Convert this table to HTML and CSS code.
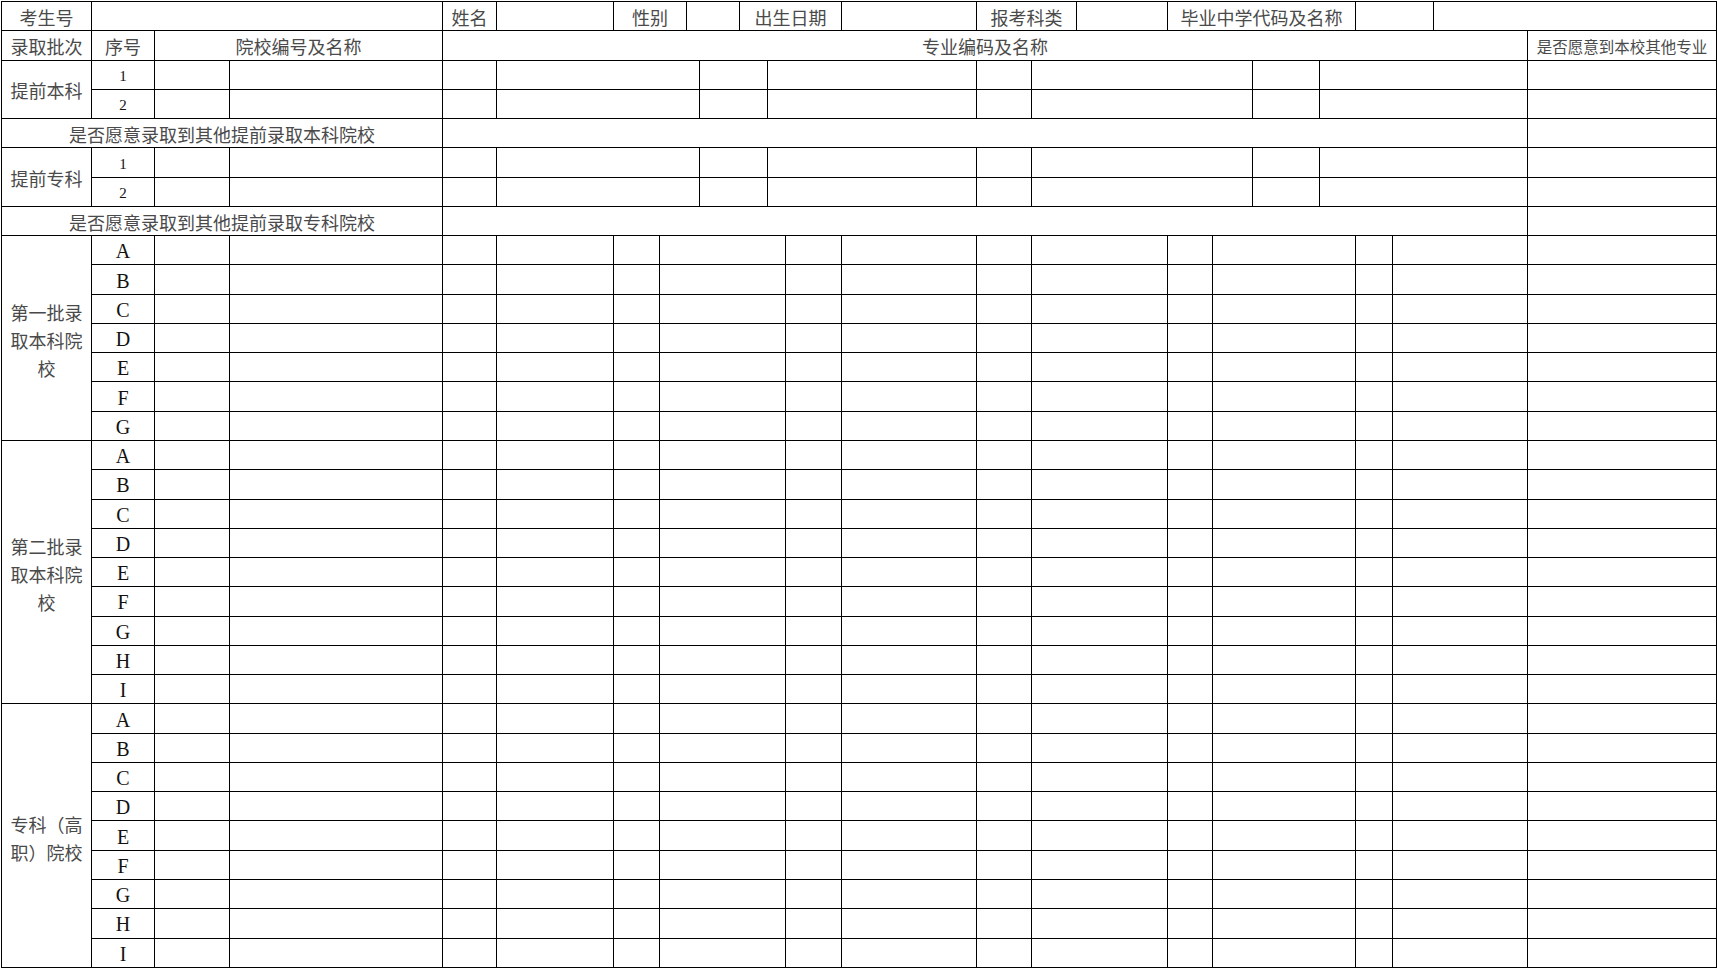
FILE: index.html
```html
<!DOCTYPE html>
<html lang="zh-CN">
<head>
<meta charset="utf-8">
<title>志愿表</title>
<link rel="stylesheet" href="styles.css">
</head>
<body>
<table class="sheet">
<colgroup>
<col class="c1"><col class="c2"><col class="c3"><col class="c4"><col class="c5">
<col class="c6"><col class="c7"><col class="c8"><col class="c9"><col class="c10">
<col class="c11"><col class="c12"><col class="c13"><col class="c14"><col class="c15">
<col class="c16"><col class="c17"><col class="c18"><col class="c19"><col class="c20">
<col class="c21"><col class="c22"><col class="c23"><col class="c24"><col class="c25">
</colgroup>
<tbody>
<tr>
<td class="lab">考生号</td><td colspan="3"></td><td class="lab">姓名</td><td></td>
<td colspan="2" class="lab">性别</td><td colspan="2"></td><td colspan="3" class="lab">出生日期</td><td></td>
<td colspan="2" class="lab">报考科类</td><td></td><td colspan="4" class="lab">毕业中学代码及名称</td>
<td colspan="2"></td><td colspan="2"></td>
</tr>
<tr>
<td class="lab">录取批次</td><td class="lab">序号</td><td colspan="2" class="lab">院校编号及名称</td>
<td colspan="20" class="lab">专业编码及名称</td><td class="lab small">是否愿意到本校其他专业</td>
</tr>
<tr>
<td rowspan="2" class="lab">提前本科</td><td class="dig">1</td><td></td><td></td><td></td>
<td colspan="4"></td><td colspan="2"></td><td colspan="3"></td><td></td><td colspan="4"></td><td></td><td colspan="4"></td><td></td>
</tr>
<tr>
<td class="dig">2</td><td></td><td></td><td></td>
<td colspan="4"></td><td colspan="2"></td><td colspan="3"></td><td></td><td colspan="4"></td><td></td><td colspan="4"></td><td></td>
</tr>
<tr>
<td colspan="4" class="lab big">是否愿意录取到其他提前录取本科院校</td><td colspan="20"></td><td></td>
</tr>
<tr>
<td rowspan="2" class="lab">提前专科</td><td class="dig">1</td><td></td><td></td><td></td>
<td colspan="4"></td><td colspan="2"></td><td colspan="3"></td><td></td><td colspan="4"></td><td></td><td colspan="4"></td><td></td>
</tr>
<tr>
<td class="dig">2</td><td></td><td></td><td></td>
<td colspan="4"></td><td colspan="2"></td><td colspan="3"></td><td></td><td colspan="4"></td><td></td><td colspan="4"></td><td></td>
</tr>
<tr>
<td colspan="4" class="lab big">是否愿意录取到其他提前录取专科院校</td><td colspan="20"></td><td></td>
</tr>

<tr><td rowspan="7" class="lab group">第一批录<br>取本科院<br>校</td><td class="let">A</td><td></td><td></td><td></td><td></td><td></td><td colspan="5"></td><td></td><td></td><td></td><td colspan="2"></td><td></td><td colspan="3"></td><td></td><td colspan="2"></td><td></td></tr>
<tr><td class="let">B</td><td></td><td></td><td></td><td></td><td></td><td colspan="5"></td><td></td><td></td><td></td><td colspan="2"></td><td></td><td colspan="3"></td><td></td><td colspan="2"></td><td></td></tr>
<tr><td class="let">C</td><td></td><td></td><td></td><td></td><td></td><td colspan="5"></td><td></td><td></td><td></td><td colspan="2"></td><td></td><td colspan="3"></td><td></td><td colspan="2"></td><td></td></tr>
<tr><td class="let">D</td><td></td><td></td><td></td><td></td><td></td><td colspan="5"></td><td></td><td></td><td></td><td colspan="2"></td><td></td><td colspan="3"></td><td></td><td colspan="2"></td><td></td></tr>
<tr><td class="let">E</td><td></td><td></td><td></td><td></td><td></td><td colspan="5"></td><td></td><td></td><td></td><td colspan="2"></td><td></td><td colspan="3"></td><td></td><td colspan="2"></td><td></td></tr>
<tr><td class="let">F</td><td></td><td></td><td></td><td></td><td></td><td colspan="5"></td><td></td><td></td><td></td><td colspan="2"></td><td></td><td colspan="3"></td><td></td><td colspan="2"></td><td></td></tr>
<tr><td class="let">G</td><td></td><td></td><td></td><td></td><td></td><td colspan="5"></td><td></td><td></td><td></td><td colspan="2"></td><td></td><td colspan="3"></td><td></td><td colspan="2"></td><td></td></tr>

<tr><td rowspan="9" class="lab group">第二批录<br>取本科院<br>校</td><td class="let">A</td><td></td><td></td><td></td><td></td><td></td><td colspan="5"></td><td></td><td></td><td></td><td colspan="2"></td><td></td><td colspan="3"></td><td></td><td colspan="2"></td><td></td></tr>
<tr><td class="let">B</td><td></td><td></td><td></td><td></td><td></td><td colspan="5"></td><td></td><td></td><td></td><td colspan="2"></td><td></td><td colspan="3"></td><td></td><td colspan="2"></td><td></td></tr>
<tr><td class="let">C</td><td></td><td></td><td></td><td></td><td></td><td colspan="5"></td><td></td><td></td><td></td><td colspan="2"></td><td></td><td colspan="3"></td><td></td><td colspan="2"></td><td></td></tr>
<tr><td class="let">D</td><td></td><td></td><td></td><td></td><td></td><td colspan="5"></td><td></td><td></td><td></td><td colspan="2"></td><td></td><td colspan="3"></td><td></td><td colspan="2"></td><td></td></tr>
<tr><td class="let">E</td><td></td><td></td><td></td><td></td><td></td><td colspan="5"></td><td></td><td></td><td></td><td colspan="2"></td><td></td><td colspan="3"></td><td></td><td colspan="2"></td><td></td></tr>
<tr><td class="let">F</td><td></td><td></td><td></td><td></td><td></td><td colspan="5"></td><td></td><td></td><td></td><td colspan="2"></td><td></td><td colspan="3"></td><td></td><td colspan="2"></td><td></td></tr>
<tr><td class="let">G</td><td></td><td></td><td></td><td></td><td></td><td colspan="5"></td><td></td><td></td><td></td><td colspan="2"></td><td></td><td colspan="3"></td><td></td><td colspan="2"></td><td></td></tr>
<tr><td class="let">H</td><td></td><td></td><td></td><td></td><td></td><td colspan="5"></td><td></td><td></td><td></td><td colspan="2"></td><td></td><td colspan="3"></td><td></td><td colspan="2"></td><td></td></tr>
<tr><td class="let">I</td><td></td><td></td><td></td><td></td><td></td><td colspan="5"></td><td></td><td></td><td></td><td colspan="2"></td><td></td><td colspan="3"></td><td></td><td colspan="2"></td><td></td></tr>

<tr><td rowspan="9" class="lab group">专科（高<br>职）院校</td><td class="let">A</td><td></td><td></td><td></td><td></td><td></td><td colspan="5"></td><td></td><td></td><td></td><td colspan="2"></td><td></td><td colspan="3"></td><td></td><td colspan="2"></td><td></td></tr>
<tr><td class="let">B</td><td></td><td></td><td></td><td></td><td></td><td colspan="5"></td><td></td><td></td><td></td><td colspan="2"></td><td></td><td colspan="3"></td><td></td><td colspan="2"></td><td></td></tr>
<tr><td class="let">C</td><td></td><td></td><td></td><td></td><td></td><td colspan="5"></td><td></td><td></td><td></td><td colspan="2"></td><td></td><td colspan="3"></td><td></td><td colspan="2"></td><td></td></tr>
<tr><td class="let">D</td><td></td><td></td><td></td><td></td><td></td><td colspan="5"></td><td></td><td></td><td></td><td colspan="2"></td><td></td><td colspan="3"></td><td></td><td colspan="2"></td><td></td></tr>
<tr><td class="let">E</td><td></td><td></td><td></td><td></td><td></td><td colspan="5"></td><td></td><td></td><td></td><td colspan="2"></td><td></td><td colspan="3"></td><td></td><td colspan="2"></td><td></td></tr>
<tr><td class="let">F</td><td></td><td></td><td></td><td></td><td></td><td colspan="5"></td><td></td><td></td><td></td><td colspan="2"></td><td></td><td colspan="3"></td><td></td><td colspan="2"></td><td></td></tr>
<tr><td class="let">G</td><td></td><td></td><td></td><td></td><td></td><td colspan="5"></td><td></td><td></td><td></td><td colspan="2"></td><td></td><td colspan="3"></td><td></td><td colspan="2"></td><td></td></tr>
<tr><td class="let">H</td><td></td><td></td><td></td><td></td><td></td><td colspan="5"></td><td></td><td></td><td></td><td colspan="2"></td><td></td><td colspan="3"></td><td></td><td colspan="2"></td><td></td></tr>
<tr><td class="let">I</td><td></td><td></td><td></td><td></td><td></td><td colspan="5"></td><td></td><td></td><td></td><td colspan="2"></td><td></td><td colspan="3"></td><td></td><td colspan="2"></td><td></td></tr>
</tbody>
</table>
</body>
</html>
```
FILE: styles.css
```css
html, body {
  margin: 0;
  padding: 0;
  background: #ffffff;
}

.sheet {
  margin: 1px 0 0 1px;
  width: 1716px;
  table-layout: fixed;
  border-collapse: collapse;
  font-family: "Noto Sans CJK SC", "Liberation Serif", serif;
  color: #4a4a4a;
}

.c1 { width: 90px; }
.c2 { width: 63px; }
.c3 { width: 75px; }
.c4 { width: 213px; }
.c5 { width: 54px; }
.c6 { width: 117px; }
.c7 { width: 46px; }
.c8 { width: 27px; }
.c9 { width: 13px; }
.c10 { width: 40px; }
.c11 { width: 28px; }
.c12 { width: 18px; }
.c13 { width: 56px; }
.c14 { width: 135px; }
.c15 { width: 55px; }
.c16 { width: 45px; }
.c17 { width: 91px; }
.c18 { width: 45px; }
.c19 { width: 40px; }
.c20 { width: 67px; }
.c21 { width: 36px; }
.c22 { width: 37px; }
.c23 { width: 41px; }
.c24 { width: 94px; }
.c25 { width: 189px; }

.sheet tr {
  height: 29.27px;
}

.sheet td {
  border: 1px solid #000;
  padding: 0;
  text-align: center;
  vertical-align: middle;
  overflow: hidden;
  white-space: nowrap;
}

.lab {
  font-size: 18px;
  line-height: 22px;
  padding-top: 2px !important;
}

.lab.big {
  font-size: 18px;
}

.lab.small {
  font-size: 15.5px;
}

.group {
  line-height: 28px;
  padding-top: 4px !important;
}

.dig {
  font-family: "Liberation Serif", serif;
  font-size: 15px;
  line-height: 18px;
  color: #111;
  padding-top: 3px !important;
}

.let {
  font-family: "Liberation Serif", serif;
  font-size: 20px;
  line-height: 22px;
  color: #111;
  padding-top: 2px !important;
}
```
